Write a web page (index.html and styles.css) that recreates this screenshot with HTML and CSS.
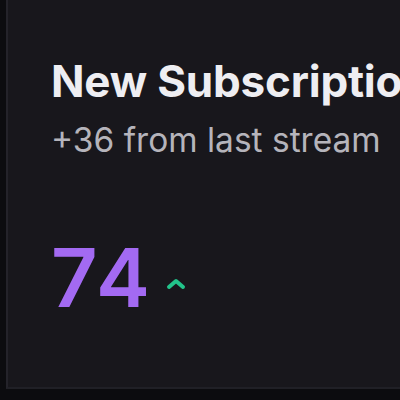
FILE: index.html
```html
<!DOCTYPE html>
<html>
<head>
<meta charset="utf-8">
<link rel="stylesheet" href="styles.css">
</head>
<body>
<div class="card">
  <h2 class="title">New Subscriptions</h2>
  <p class="sub">+36 from last stream</p>
  <div class="stat">
    <span class="value">74</span>
    <svg class="up" width="22" height="14" viewBox="0 0 22 14"><path d="M4 11 L11 5 L18 11" fill="none" stroke="#22c38a" stroke-width="4" stroke-linecap="round" stroke-linejoin="round"/></svg>
  </div>
</div>
</body>
</html>
```
FILE: styles.css
```css
html, body {
  margin: 0;
  padding: 0;
  background: #0c0c0f;
  width: 400px;
  height: 400px;
  overflow: hidden;
}
.card {
  box-sizing: border-box;
  margin-left: 6px;
  width: 394px;
  height: 389px;
  background: #18171c;
  border-left: 2px solid #24232a;
  border-bottom: 2px solid #202026;
  padding: 56px 0 0 43px;
  font-family: Inter, "Noto Sans", sans-serif;
  white-space: nowrap;
  overflow: hidden;
}
.title {
  margin: 0;
  font-size: 44px;
  font-weight: 700;
  color: #eeeef2;
  line-height: 50px;
  letter-spacing: -0.2px;
}
.sub {
  margin: 14px 0 0;
  font-size: 33.5px;
  font-weight: 400;
  color: #b5b4bb;
  line-height: 40px;
}
.stat {
  display: flex;
  align-items: flex-end;
  margin-top: 78px;
  gap: 12px;
}
.value {
  font-size: 81px;
  font-weight: 600;
  color: #a36af2;
  line-height: 81px;
  letter-spacing: 3px;
}
.up {
  margin-bottom: 29px;
}
```
